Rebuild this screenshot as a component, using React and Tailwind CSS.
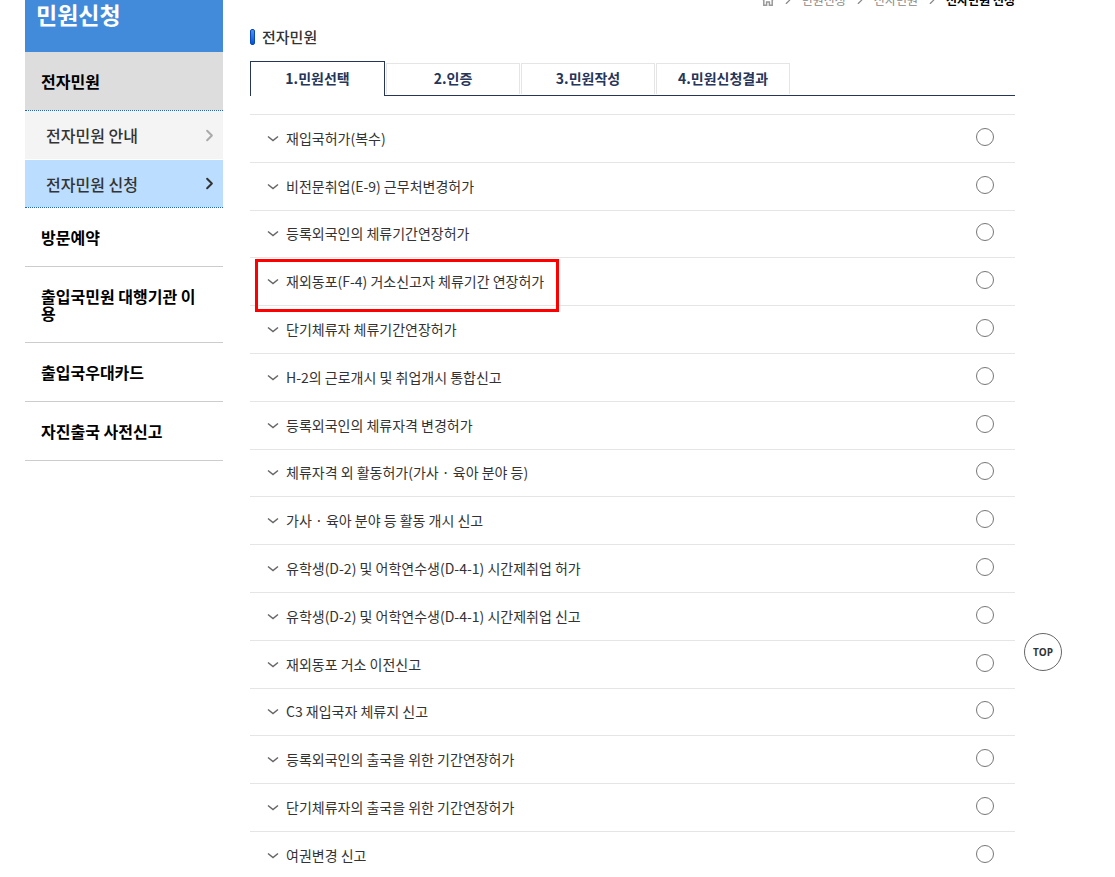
import { ChevronRight } from "lucide-react";

const services = [
  "재입국허가(복수)",
  "비전문취업(E-9) 근무처변경허가",
  "등록외국인의 체류기간연장허가",
  "재외동포(F-4) 거소신고자 체류기간 연장허가",
  "단기체류자 체류기간연장허가",
  "H-2의 근로개시 및 취업개시 통합신고",
  "등록외국인의 체류자격 변경허가",
  "체류자격 외 활동허가(가사 · 육아 분야 등)",
  "가사 · 육아 분야 등 활동 개시 신고",
  "유학생(D-2) 및 어학연수생(D-4-1) 시간제취업 허가",
  "유학생(D-2) 및 어학연수생(D-4-1) 시간제취업 신고",
  "재외동포 거소 이전신고",
  "C3 재입국자 체류지 신고",
  "등록외국인의 출국을 위한 기간연장허가",
  "단기체류자의 출국을 위한 기간연장허가",
  "여권변경 신고",
];

const HIGHLIGHTED = 3;

const steps = ["1.민원선택", "2.인증", "3.민원작성", "4.민원신청결과"];

const menu = ["방문예약", "출입국민원 대행기관 이용", "출입국우대카드", "자진출국 사전신고"];

function HomeIcon() {
  return (
    <svg width="12" height="12" viewBox="0 0 12 12" fill="none" stroke="#999" strokeWidth="1.5">
      <path d="M0.5 6 L6 1 L11.5 6 M1.8 5 V11.2 H4.6 V8 H7.4 V11.2 H10.2 V5" />
    </svg>
  );
}

function Sidebar() {
  return (
    <aside className="w-[198px] shrink-0 text-base font-medium text-black">
      <h2 className="h-[52px] bg-[#428bdb] pl-[11px] text-[23px] leading-7 font-bold text-white">민원신청</h2>
      <nav>
        <a href="#civil" className="flex h-[58px] items-center bg-[#ddd] pl-4 font-bold">전자민원</a>
        <ul className="border-y border-dotted border-[#1c69c4] text-[#333]">
          <li className="border-b border-white">
            <a href="#guide" className="flex h-12 items-center justify-between bg-[#f4f4f4] pr-1 pl-[21px]">
              전자민원 안내
              <ChevronRight size={19} strokeWidth={2.5} className="text-[#aaa]" />
            </a>
          </li>
          <li>
            <a href="#apply" className="flex h-[47px] items-center justify-between bg-[#bbddff] pr-1 pl-[21px]">
              전자민원 신청
              <ChevronRight size={19} strokeWidth={2.5} />
            </a>
          </li>
        </ul>
        <ul>
          {menu.map((item) => (
            <li key={item} className="border-b border-[#ccc]">
              <a href="#menu" className="block px-4 pt-[21px] pb-5 leading-[17px] font-bold break-all">{item}</a>
            </li>
          ))}
        </ul>
      </nav>
    </aside>
  );
}

function Breadcrumb() {
  return (
    <nav className="flex h-2 items-end justify-end text-xs leading-4 text-[#888]">
      <div className="flex items-center gap-[7px]">
        <a href="#home" aria-label="홈"><HomeIcon /></a>
        <ChevronRight size={14} strokeWidth={2} />
        <a href="#apply">민원신청</a>
        <ChevronRight size={14} strokeWidth={2} />
        <a href="#civil">전자민원</a>
        <ChevronRight size={14} strokeWidth={2} />
        <strong className="font-bold text-black">전자민원 신청</strong>
      </div>
    </nav>
  );
}

function Steps() {
  return (
    <div role="tablist" className="mt-[14px] flex h-[35px] items-end gap-px border-b border-[#26355a] text-sm font-bold text-[#26355a]">
      {steps.map((step, i) => (
        <button
          key={step}
          type="button"
          role="tab"
          aria-selected={i === 0}
          className={
            i === 0
              ? "-mb-px h-[35px] w-[135px] border border-b-0 border-[#26355a] bg-white pb-0.5"
              : "mb-px h-[31px] w-[134px] border border-b-0 border-[#e5e5e5] bg-white pb-0.5"
          }
        >
          {step}
        </button>
      ))}
    </div>
  );
}

function ServiceRow({ name, index }) {
  const id = `service-${index}`;
  return (
    <li className="relative flex h-12 items-center border-b border-[#e5e5e5] pr-[21px] pb-0.5 pl-[17px] nth-[5n+3]:h-[47px]">
      <button type="button" aria-label={`${name} 상세보기`} className="mr-[7px] text-[#666]">
        <svg width="12" height="12" viewBox="0 0 12 12" fill="none" stroke="currentColor" strokeWidth="1.5">
          <path d="M1 4.5 L6 8.5 L11 4.5" />
        </svg>
      </button>
      <label htmlFor={id} className="grow">{name}</label>
      <input
        id={id}
        type="radio"
        name="service"
        className="mb-0.5 size-[18px] appearance-none rounded-full border border-[#777] bg-white checked:border-[5px] checked:border-[#26355a]"
      />
      {index === HIGHLIGHTED && (
        <span className="pointer-events-none absolute top-px left-[5px] z-10 h-[53px] w-[304px] border-3 border-[#fe0000]" />
      )}
    </li>
  );
}

export default function App() {
  return (
    <div className="relative flex h-screen gap-[27px] overflow-hidden bg-white pr-[100px] pl-[25px] font-['Noto_Sans_CJK_KR','Noto_Sans',sans-serif]">
      <Sidebar />
      <main className="min-w-0 grow">
        <Breadcrumb />
        <h3 className="mt-[19px] flex h-5 items-center gap-[7px] text-[15px] leading-5 font-medium text-[#333]">
          <span className="h-4 w-[5px] rounded-xs border border-[#0a49b5] bg-linear-to-b from-[#4b93f5] to-[#0052dc]" />
          전자민원
        </h3>
        <Steps />
        <ul className="mt-[18px] border-t border-[#e5e5e5] text-sm text-[#333]">
          {services.map((name, i) => (
            <ServiceRow key={name} name={name} index={i} />
          ))}
        </ul>
      </main>
      <button
        type="button"
        className="fixed top-[633px] right-[53px] size-[38px] rounded-full border border-[#666] bg-white font-['Open_Sans',sans-serif] text-[10px] font-bold text-[#333]"
      >
        TOP
      </button>
    </div>
  );
}
